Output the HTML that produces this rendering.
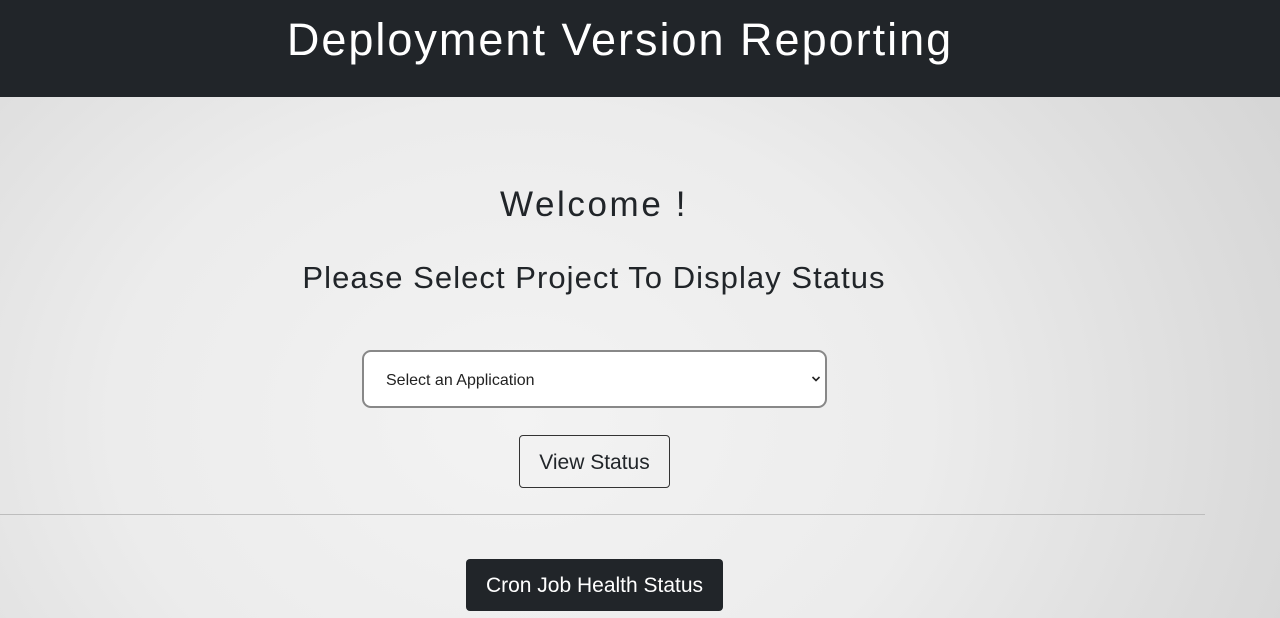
<!DOCTYPE html>
<html><head><style>
html,body{margin:0;padding:0;width:1280px;height:618px;overflow:hidden}
body{font-family:"Liberation Sans",sans-serif;background:radial-gradient(ellipse 900px 700px at 520px 420px,#f3f3f3 0%,#ececec 45%,#dcdcdc 80%,#d4d4d4 100%);position:relative;color:#212529}
.hdr{position:absolute;left:0;top:0;width:1280px;height:97px;background:#212529}
.hdr div{position:absolute;left:240px;top:14px;width:760px;text-align:center;color:#fff;font-size:45px;white-space:nowrap;letter-spacing:2px}
.c{position:absolute;left:0;width:1188px;text-align:center;white-space:nowrap}
.w{top:185px;font-size:35px;letter-spacing:2.6px}
.s{top:260px;font-size:31px;letter-spacing:1.05px}
.sel{position:absolute;left:362px;top:350px;width:465px;height:58px;border:2px solid #888;border-radius:9px;background:#fff;box-sizing:border-box}
.sel span{position:absolute;left:22px;top:20px;font-size:16px;color:#222}
.sel svg{position:absolute;right:4px;top:23px}
.vs{position:absolute;left:519px;top:435px;width:151px;height:53px;border:1px solid #333;border-radius:4px;box-sizing:border-box;font-size:21px;text-align:center;line-height:53px}
.hr{position:absolute;left:0;top:514px;width:1205px;height:1px;background:#bdbdbd}
.cj{position:absolute;left:466px;top:559px;width:257px;height:52px;background:#212529;border-radius:4px;color:#fff;font-size:21px;text-align:center;line-height:54px}
</style></head><body>
<div class="hdr"><div>Deployment Version Reporting</div></div>
<div class="c w">Welcome !</div>
<div class="c s">Please Select Project To Display Status</div>
<div class="sel"><span>Select an Application</span><svg width="10" height="8" viewBox="0 0 10 8"><path d="M1.5 2 L5 5.5 L8.5 2" stroke="#222" stroke-width="1.6" fill="none"/></svg></div>
<div class="vs">View Status</div>
<div class="hr"></div>
<div class="cj">Cron Job Health Status</div>
</body></html>
